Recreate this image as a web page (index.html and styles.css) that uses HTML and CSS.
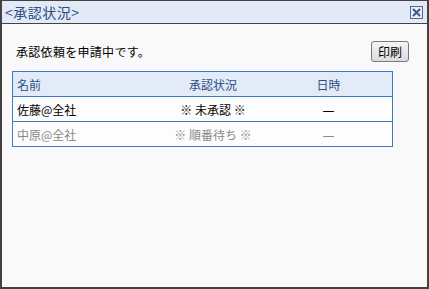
FILE: index.html
```html
<!DOCTYPE html>
<html lang="ja">
<head>
    <meta charset="UTF-8">
    <title>承認状況</title>
    <link rel="stylesheet" href="styles.css">
</head>
<body>
    <div class="dialog">
        <!-- Title Bar -->
        <div class="dialog-title">
            <span class="title-text">&lt;承認状況&gt;</span>
            <button class="close-button" aria-label="閉じる">
                <svg width="13" height="13" viewBox="0 0 13 13">
                    <rect x="0.5" y="0.5" width="12" height="12" fill="#e9eef7" stroke="#4f6b93"/>
                    <path d="M3 3 L10 10 M10 3 L3 10" stroke="#3f5b85" stroke-width="2"/>
                </svg>
            </button>
        </div>

        <!-- Body -->
        <div class="dialog-body">
            <div class="message-row">
                <p class="message">承認依頼を申請中です。</p>
                <button class="print-button">印刷</button>
            </div>

            <table class="status-table">
                <thead>
                    <tr>
                        <th class="col-name">名前</th>
                        <th class="col-status">承認状況</th>
                        <th class="col-date">日時</th>
                    </tr>
                </thead>
                <tbody>
                    <tr>
                        <td class="col-name">佐藤@全社</td>
                        <td class="col-status">※ 未承認 ※</td>
                        <td class="col-date"><span class="dash">—</span></td>
                    </tr>
                    <tr class="waiting">
                        <td class="col-name">中原@全社</td>
                        <td class="col-status">※ 順番待ち ※</td>
                        <td class="col-date"><span class="dash">—</span></td>
                    </tr>
                </tbody>
            </table>
        </div>
    </div>
</body>
</html>
```

FILE: styles.css
```css
body {
    margin: 0;
    padding: 0;
    font-family: "Noto Sans CJK JP", "DejaVu Sans", sans-serif;
    background-color: #f9f9f9;
}

/* Dialog Window */
.dialog {
    box-sizing: border-box;
    width: 429px;
    height: 289px;
    border: 2px solid #424242;
    border-top-width: 1px;
    background-color: #f9f9f9;
}

/* Title Bar */
.dialog-title {
    height: 22px;
    display: flex;
    align-items: center;
    justify-content: space-between;
    padding: 0 4px 0 3px;
    background-color: #e2eaf8;
    border-bottom: 1px solid #424242;
}

.title-text {
    font-size: 14px;
    color: #2e4c7c;
    line-height: 22px;
    letter-spacing: 0.5px;
}

.close-button {
    background: transparent;
    border: none;
    padding: 0;
    width: 13px;
    height: 13px;
    display: flex;
    cursor: pointer;
}

/* Body */
.dialog-body {
    padding: 17px 18px 0 10px;
}

.message-row {
    display: flex;
    justify-content: space-between;
    align-items: center;
    padding-left: 4px;
}

.message {
    margin: 0;
    font-size: 12px;
    color: #000;
    letter-spacing: 0.3px;
}

.print-button {
    font-family: inherit;
    font-size: 12px;
    color: #000;
    width: 38px;
    height: 21px;
    padding: 0;
    border: 1px solid #7a7a7a;
    border-radius: 3px;
    background: linear-gradient(#f4f4f4, #dcdcdc);
    cursor: pointer;
}

/* Status Table */
.status-table {
    margin-top: 9px;
    width: 381px;
    border-collapse: collapse;
    border: 1px solid #3a7bc6;
    font-size: 12px;
}

.status-table th,
.status-table td {
    height: 24px;
    padding: 0 4px;
    font-weight: normal;
    border-bottom: 1px solid #3a7bc6;
}

.status-table th {
    background-color: #e3ebf9;
    color: #2c4f82;
}

.status-table td {
    background-color: #fdfdfd;
    color: #000;
}

.col-name {
    width: 140px;
    text-align: left;
}

.col-status {
    width: 96px;
    text-align: center;
}

.col-date {
    text-align: center;
}

.dash {
    font-family: "DejaVu Sans", sans-serif;
}

.waiting td {
    color: #8a8a8a;
}
```
